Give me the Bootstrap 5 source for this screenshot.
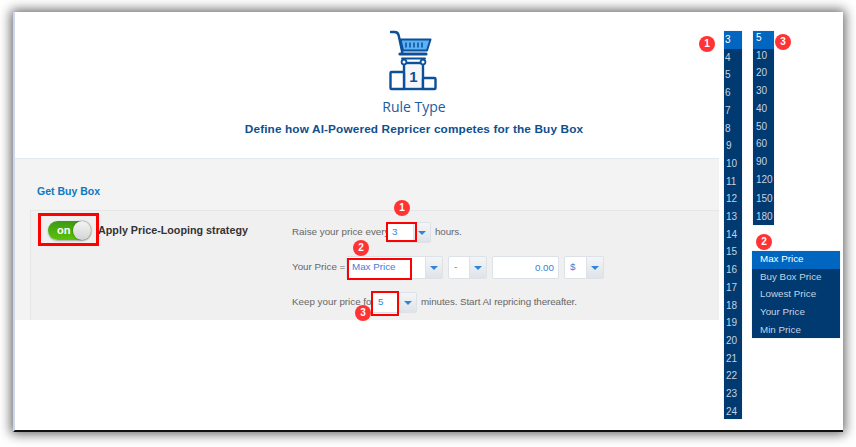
<!DOCTYPE html>
<html lang="en">
<head>
<meta charset="UTF-8">
<title>Rule Type</title>
<link rel="stylesheet" href="https://cdn.jsdelivr.net/npm/bootstrap@5.3.0/dist/css/bootstrap.min.css">
<style>
html, body { height: 447px; overflow: hidden; background: #fff; }
body { font-family: "Liberation Sans", Arial, sans-serif; font-size: 10px; color: #555; padding: 12px 13px 15px 13px; }
.shot-window { height: 420px; width: 830px; background: #fff; border-left: 2px solid #cdd9ea; border-bottom: 2px solid #111; box-shadow: 0 0 11px 2px rgba(0,0,0,.62); position: relative; }
.main-col { width: 704px; flex: none; }
.rule-head { height: 147px; padding: 18px 0 0 94px; border-bottom: 1px solid #e2e9f1; }
.rule-icon { display: block; margin: 0 auto; width: 50px; height: 62px; }
.rule-title { font-family: "Open Sans", sans-serif; font-size: 14px; color: #1a5c9c; line-height: 18px; margin-top: 6px; }
.rule-sub { font-size: 11.8px; font-weight: 700; color: #0d4f8f; line-height: 14px; margin-top: 6px; letter-spacing: .13px; white-space: nowrap; }
.rule-body { height: 161px; background: #f3f3f3; padding-left: 15px; }
.buy-title { font-size: 10.5px; font-weight: 700; color: #0b78c0; height: 51px; padding: 25px 0 0 7px; line-height: 14px; }
.strategy-box { height: 110px; background: #f0f0f0; border-top: 1px solid #e6e6e6; border-left: 1px solid #e6e6e6; }
.switch-col { width: 261px; flex: none; }
.switch-wrap { padding: 9px 0 0 17px; }
.on-switch { width: 43px; height: 19px; border-radius: 10px; background: linear-gradient(#3c9a12, #5cc20a); box-shadow: 0 1px 2px rgba(0,0,0,.3); color: #fff; font-weight: 700; font-size: 11px; line-height: 19px; padding-left: 9px; position: relative; flex: none; }
.on-knob { position: absolute; right: 0; top: 0; width: 18px; height: 19px; border-radius: 50%; background: linear-gradient(#f4f4f4, #d4d4d4); box-shadow: 0 0 2px rgba(0,0,0,.55); }
.strategy-name { font-size: 10.75px; font-weight: 700; color: #333; margin-left: 7px; line-height: 19px; white-space: nowrap; padding-top: 1px; }
.form-col { padding-top: 11px; }
.price-row { display: flex; align-items: center; height: 21px; white-space: nowrap; font-size: 9.8px; color: #666; }
.row-two { margin-top: 13px; height: 23px; }
.row-three { margin-top: 13px; }
.lead-in { flex: none; }
.lead-raise { width: 94px; }
.lead-your { width: 54px; }
.lead-keep { width: 80px; }
.tail-text { margin-left: 4px; letter-spacing: -.08px; }
.pick { display: flex; height: 100%; background: #fff; border: 1px solid #dde2e8; border-radius: 2px; color: #3b82d8; flex: none; align-items: center; position: relative; }
.pick-val { flex: 1; padding-left: 5px; }
.pick-arrow { width: 17px; height: 100%; flex: none; background: linear-gradient(#f4f5f7, #dfe3e8); display: flex; align-items: center; justify-content: center; border-left: 1px solid #dde2e8; }
.pick-arrow::after { content: ""; border-left: 4px solid transparent; border-right: 4px solid transparent; border-top: 4px solid #2f86d8; }
.pick-hours { width: 45px; }
.pick-max { width: 97px; }
.pick-sign { width: 39px; margin-left: 5px; }
.pick-cur { width: 40px; margin-left: 5px; }
.price-input { width: 67px; height: 100%; margin-left: 5px; background: #fff; border: 1px solid #dde2e8; border-radius: 2px; color: #3b82d8; text-align: right; padding-right: 4px; line-height: 21px; flex: none; }
.drop-col { position: absolute; background: #003a70; color: #c4d2e0; font-size: 10px; line-height: 17.7px; box-shadow: 0 0 1px #b8d0ea; }
.drop-col div { white-space: nowrap; }
.drop-col .picked { background: #0066c0; color: #fff; }
.hours-list { left: 709px; top: 19px; width: 18px; height: 388px; }
.hours-list div { padding-left: 2px; }
.hours-list div:nth-child(-n+6) { padding-left: 1px; }
.mins-list { left: 738px; top: 19px; width: 21px; height: 194px; }
.mins-list div { padding: 0 0 3px 3px; line-height: 14.7px; }
.mins-list .step-gap { margin-top: 2px; }
.price-list { left: 737px; top: 239px; width: 88px; height: 87px; font-size: 9.8px; }
.price-list div { padding: 0 0 1px 8px; line-height: 16.7px; }
.red-mark { position: absolute; border: 2px solid #f00; }
.mark-switch { left: 23px; top: 201px; width: 61px; height: 33px; border-width: 3px; }
.mark-hours { left: 371px; top: 210px; width: 31px; height: 20px; }
.mark-max { left: 332px; top: 246px; width: 65px; height: 22px; }
.mark-mins { left: 356px; top: 279px; width: 28px; height: 25px; }
.num-dot { position: absolute; width: 16px; height: 16px; border-radius: 50%; background: #f33; color: #fff; font-size: 10px; font-weight: 700; line-height: 16px; text-align: center; }
.dot-hours { left: 379px; top: 188px; }
.dot-max { left: 338px; top: 228px; }
.dot-mins { left: 340px; top: 293px; }
.dot-list-hours { left: 684px; top: 24px; }
.dot-list-mins { left: 760px; top: 22px; }
.dot-list-price { left: 741px; top: 222px; }
</style>
</head>
<body>
<div class="shot-window d-flex">
    <div class="main-col">
        <div class="rule-head text-center">
            <svg class="rule-icon" viewBox="389 30 50 62" xmlns="http://www.w3.org/2000/svg">
                <path d="M391 32 h3.500 q3.500 0 4.200 3.500 l3.600 17" fill="none" stroke="#0c4f9a" stroke-width="2.400" stroke-linecap="round"/>
                <path d="M400.500 39.500 H430.500 L427 50.500 H403 Z" fill="#5cb2f5" stroke="#0c4f9a" stroke-width="2" stroke-linejoin="round"/>
                <path d="M406 42.500 v5 M410 42.500 v5 M414 42.500 v5 M418 42.500 v5 M422 42.500 v5" stroke="#0c4f9a" stroke-width="1.500"/>
                <path d="M400 54 H426" stroke="#0c4f9a" stroke-width="3.200" stroke-linecap="round"/>
                <path d="M402 58.500 H425" stroke="#0c4f9a" stroke-width="2" stroke-linecap="round"/>
                <rect x="404" y="63" width="19" height="26" fill="#f5f6f7" stroke="#0c4f9a" stroke-width="2.400"/>
                <rect x="390.500" y="72" width="13.500" height="17" rx="1" fill="#fff" stroke="#0c4f9a" stroke-width="2.400"/>
                <rect x="423" y="78" width="12.500" height="11" rx="1" fill="#fff" stroke="#0c4f9a" stroke-width="2.400"/>
                <circle cx="404" cy="62" r="2.400" fill="#fff" stroke="#0c4f9a" stroke-width="1.800"/>
                <circle cx="423" cy="62" r="2.400" fill="#fff" stroke="#0c4f9a" stroke-width="1.800"/>
                <text x="413.500" y="82" text-anchor="middle" font-family="Liberation Sans, sans-serif" font-size="15" font-weight="700" fill="#0c4f9a">1</text>
            </svg>
            <div class="rule-title">Rule Type</div>
            <div class="rule-sub">Define how AI-Powered Repricer competes for the Buy Box</div>
        </div>
        <div class="rule-body">
            <div class="buy-title">Get Buy Box</div>
            <div class="strategy-box d-flex">
                <div class="switch-col">
                    <div class="switch-wrap d-flex align-items-center">
                        <div class="on-switch">on<span class="on-knob"></span></div>
                        <span class="strategy-name">Apply Price-Looping strategy</span>
                    </div>
                </div>
                <div class="form-col">
                    <div class="price-row">
                        <span class="lead-in lead-raise">Raise your price every</span>
                        <div class="pick pick-hours"><span class="pick-val">3</span><span class="pick-arrow"></span></div>
                        <span class="tail-text">hours.</span>
                    </div>
                    <div class="price-row row-two">
                        <span class="lead-in lead-your">Your Price =</span>
                        <div class="pick pick-max"><span class="pick-val">Max Price</span><span class="pick-arrow"></span></div>
                        <div class="pick pick-sign"><span class="pick-val">-</span><span class="pick-arrow"></span></div>
                        <div class="price-input">0.00</div>
                        <div class="pick pick-cur"><span class="pick-val">$</span><span class="pick-arrow"></span></div>
                    </div>
                    <div class="price-row row-three">
                        <span class="lead-in lead-keep">Keep your price for</span>
                        <div class="pick pick-hours"><span class="pick-val">5</span><span class="pick-arrow"></span></div>
                        <span class="tail-text">minutes. Start AI repricing thereafter.</span>
                    </div>
                </div>
            </div>
        </div>
    </div>

    <div class="drop-col hours-list" id="hoursList"></div>
    <div class="drop-col mins-list">
        <div class="picked">5</div><div>10</div><div>20</div><div>30</div><div>40</div><div>50</div><div>60</div><div>90</div><div>120</div><div class="step-gap">150</div><div>180</div>
    </div>
    <div class="drop-col price-list">
        <div class="picked">Max Price</div><div>Buy Box Price</div><div>Lowest Price</div><div>Your Price</div><div>Min Price</div>
    </div>

    <span class="red-mark mark-switch"></span>
    <span class="red-mark mark-hours"></span>
    <span class="red-mark mark-max"></span>
    <span class="red-mark mark-mins"></span>

    <span class="num-dot dot-hours">1</span>
    <span class="num-dot dot-max">2</span>
    <span class="num-dot dot-mins">3</span>
    <span class="num-dot dot-list-hours">1</span>
    <span class="num-dot dot-list-mins">3</span>
    <span class="num-dot dot-list-price">2</span>
</div>
<script>
    // hours dropdown runs 3..24
    const hoursList = document.getElementById("hoursList");
    for (let h = 3; h <= 24; h++) {
        const row = document.createElement("div");
        row.innerText = h;
        if (h === 3) row.className = "picked";
        hoursList.appendChild(row);
    }
</script>
<script src="https://cdn.jsdelivr.net/npm/bootstrap@5.3.0/dist/js/bootstrap.bundle.min.js"></script>
</body>
</html>
